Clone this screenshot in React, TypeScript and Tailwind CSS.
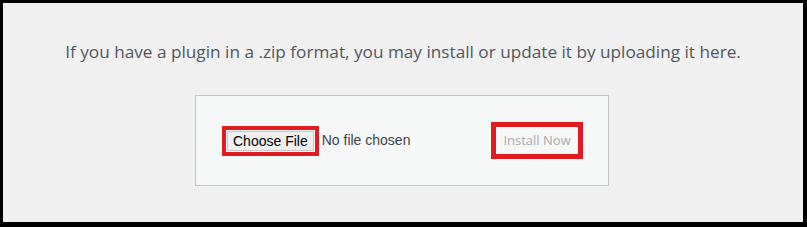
export default function App() {
  return (
    <div className="h-[227px] w-[807px] border-t-[3px] border-l-[3px] border-r-[4px] border-b-[5px] border-black bg-[#f0f0f1] font-['Open_Sans',sans-serif]">
      <p className="pt-[36px] text-center text-[17.2px] leading-[26px] text-[#50575e]">
        If you have a plugin in a .zip format, you may install or update it by uploading it here.
      </p>
      <div className="ml-[192px] mt-[30px] flex h-[91px] w-[414px] items-center border border-[#c3c4c7] bg-[#f6f7f7] pl-[26px]">
        <div className="flex items-center">
          <span className="border-[4px] border-[#e01b22] p-[1px]">
            <span className="block border border-[#c8c8c8] bg-[#efefef] px-[5px] font-['Liberation_Sans',Arial,sans-serif] text-[14px] leading-[18px] text-black">
              Choose File
            </span>
          </span>
          <span className="ml-[3px] font-['Liberation_Sans',Arial,sans-serif] text-[14px] text-[#3c434a]">
            No file chosen
          </span>
        </div>
        <span className="ml-[81px] inline-block border-[5px] border-[#e01b22] bg-[#f6f7f7] px-[7px] py-[4px] text-[13px] leading-[19px] text-[#a7aaad]">
          Install Now
        </span>
      </div>
    </div>
  );
}
